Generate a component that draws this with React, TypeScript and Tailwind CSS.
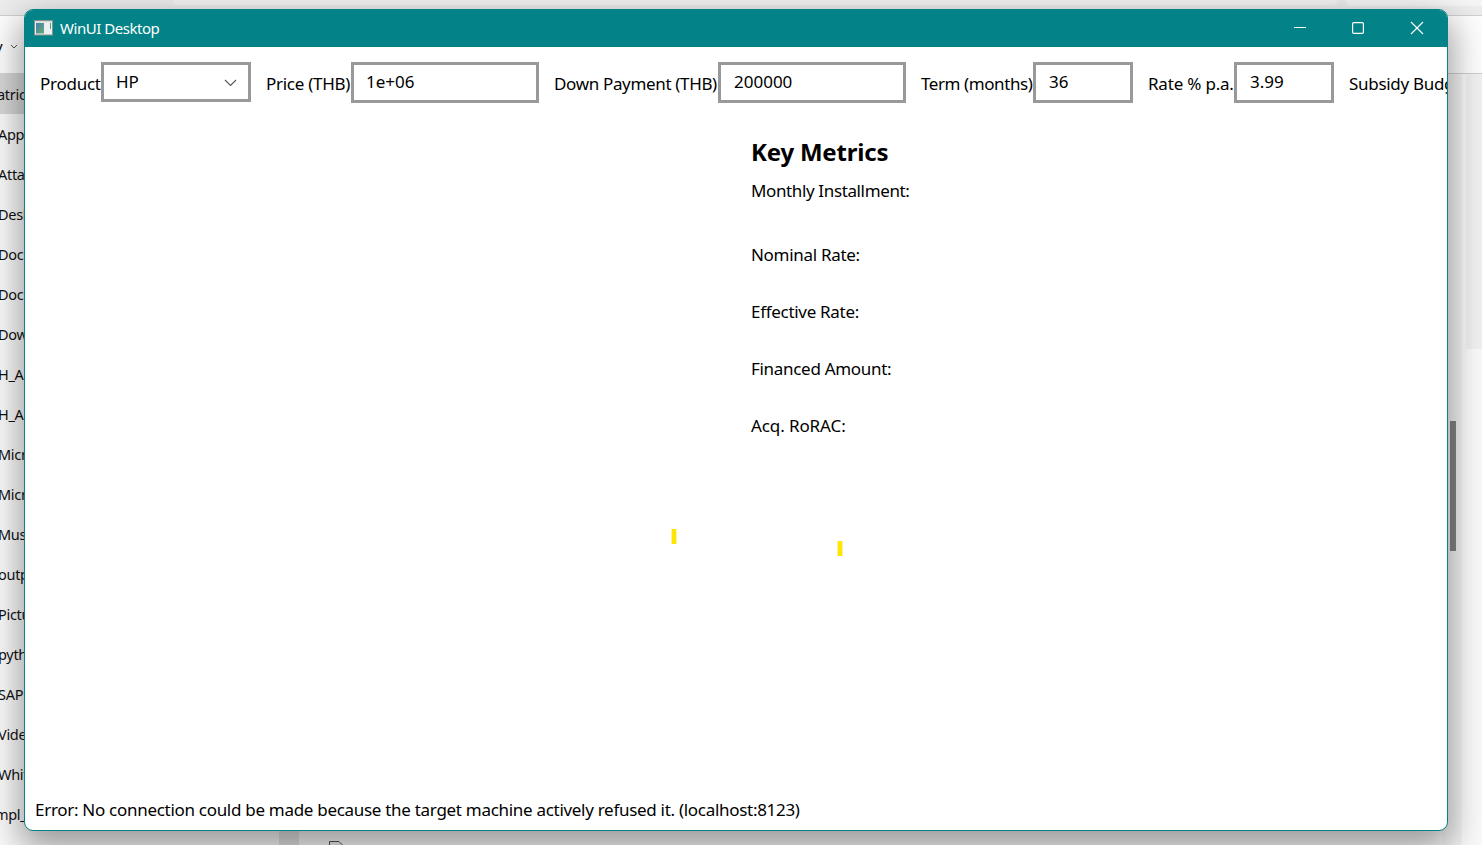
import React from "react";

const folders = [
  "atrick", "AppData", "Attachments", "Desktop", "Documents", "Documents", "Downloads",
  "H_A", "H_A", "Microsoft", "Microsoft", "Music", "output", "Pictures", "python",
  "SAP", "Videos", "Whiteboard", "mpl_",
];

const fields = [
  { label: "Price (THB)", value: "1e+06", labelWidth: "w-[85px]", boxWidth: "w-[188px]", tracking: "tracking-[-0.28px]", pad: "pl-[12px]" },
  { label: "Down Payment (THB)", value: "200000", labelWidth: "w-[164px]", boxWidth: "w-[188px]", tracking: "tracking-[-0.34px]", pad: "pl-[13px]" },
  { label: "Term (months)", value: "36", labelWidth: "w-[112px]", boxWidth: "w-[100px]", tracking: "tracking-[-0.42px]", pad: "pl-[13px]" },
  { label: "Rate % p.a.", value: "3.99", labelWidth: "w-[86px]", boxWidth: "w-[100px]", tracking: "tracking-[-0.2px]", pad: "pl-[13px]" },
];

const metrics = [
  { label: "Nominal Rate:", tracking: "tracking-[-0.3px]" },
  { label: "Effective Rate:", tracking: "tracking-[-0.3px]" },
  { label: "Financed Amount:", tracking: "tracking-[-0.3px]" },
  { label: "Acq. RoRAC:", tracking: "tracking-[-0.1px]" },
];

function Explorer() {
  return (
    <div className="flex h-full flex-col bg-[#fafafa]">
      <div className="flex h-[15px] shrink-0 bg-[#ececec]">
        <div className="h-[5px] w-[173px]" />
        <div className="h-[5px] w-[1164px] rounded-b-sm bg-[#f3f3f3]" />
        <div className="h-[6px] w-[10px]" />
        <div className="h-[6px] flex-1 rounded-bl-sm bg-[#f5f5f5]" />
      </div>
      <div className="flex h-[59px] shrink-0 items-center border-y border-[#cfcfcf] bg-[#fdfdfd]">
        <span className="-ml-[5px] mt-[3px] text-[15px]">v</span>
        <svg className="ml-[7px] mt-[4px]" width="8" height="6" viewBox="0 0 8 6" fill="none" stroke="#555">
          <path d="M1 1 4 4 7 1" />
        </svg>
      </div>
      <div className="flex min-h-0 flex-1">
        <div className="-mt-px w-[279px] shrink-0">
          {folders.map((name, i) => (
            <div
              key={i}
              className={
                "flex items-center overflow-hidden whitespace-nowrap text-[14.5px] tracking-[-0.3px] text-[#111] " +
                (i === 0 ? "h-[41px] bg-[#d6d6d6] pt-[3px]" : "h-[40px] pt-px")
              }
            >
              <span className={i === 18 ? "-ml-[5px]" : i === 0 ? "-ml-[3px]" : "-ml-[2px]"}>{name}</span>
            </div>
          ))}
        </div>
        <div className="w-[20px] shrink-0 bg-[#e4e4e4]" />
        <div className="flex flex-1 flex-col justify-end">
          <svg className="ml-[30px]" width="14" height="4" viewBox="0 0 14 4" fill="#eee" stroke="#555">
            <path d="M.5 5V.5H10L13 3.5V5" />
          </svg>
        </div>
        <div className="w-[21px] border-r border-[#fff] bg-[#f4f4f4] pt-[347px]">
          <div className="ml-[8px] h-[130px] w-[6px] bg-[#858585]" />
        </div>
        <div className="w-[19px] pl-[3px]">
          <div className="h-[275px] bg-[#f1f1f1]" />
        </div>
      </div>
    </div>
  );
}

function TitleBar() {
  return (
    <header className="flex h-[37px] shrink-0 items-center bg-[#038387] text-white">
      <svg className="-mt-[2px] ml-[9px]" width="19" height="16" viewBox="0 0 19 16">
        <defs>
          <linearGradient id="pane" x1="0" y1="0" x2="1" y2="1">
            <stop offset="0" stopColor="#477db0" />
            <stop offset="1" stopColor="#62ad72" />
          </linearGradient>
        </defs>
        <rect x=".5" y=".5" width="18" height="14.5" fill="#edf0f0" stroke="#8b9292" />
        <rect x="1" y="1" width="17" height="1.5" fill="#d4d9d9" />
        <rect x="2" y="3" width="8" height="10.5" fill="url(#pane)" />
        <rect x="16" y="3" width="1" height="6" fill="#58a078" />
      </svg>
      <h1 className="-mt-px ml-[7px] text-[15px] leading-[20px] tracking-[-0.46px]">WinUI Desktop</h1>
      <div className="-mt-px ml-auto mr-[23px] flex items-center gap-[45px]">
        <svg width="14" height="14" viewBox="0 0 14 14" stroke="white" fill="none"><path d="M2 6.5H14" /></svg>
        <svg width="14" height="14" viewBox="0 0 14 14" stroke="white" fill="none" strokeWidth="1.2">
          <rect x="1.6" y="1.6" width="10.8" height="10.8" rx="1.2" />
        </svg>
        <svg width="14" height="14" viewBox="0 0 14 14" stroke="white" fill="none" strokeWidth="1.2"><path d="M1 1 13 13M13 1 1 13" /></svg>
      </div>
    </header>
  );
}

export default function App() {
  return (
    <div className="relative h-[845px] w-[1482px] overflow-hidden font-['Noto_Sans','Open_Sans',sans-serif]">
      <Explorer />
      <main className="absolute left-[24px] top-[9px] flex h-[822px] w-[1424px] flex-col overflow-hidden rounded-[9px] border border-[#038387] bg-white text-[17px] leading-[24px] text-black shadow-[0_14px_34px_4px_rgba(0,0,0,0.38)]">
        <TitleBar />
        <div className="flex h-[72px] shrink-0 items-start overflow-hidden whitespace-nowrap pl-[15px] pt-[15px]">
          <label className="mt-[10px] w-[61px] shrink-0 tracking-[-0.25px]">Product</label>
          <div className="flex h-[40px] w-[150px] shrink-0 items-center justify-between border-[3px] border-[#999] pl-[12px] pr-[11px]">
            <span className="tracking-[-0.1px]">HP</span>
            <svg className="mt-px" width="13" height="8" viewBox="0 0 13 8" fill="none" stroke="#555" strokeWidth="1.1"><path d="M1 1 6.5 6.5 12 1" /></svg>
          </div>
          {fields.map((f) => (
            <React.Fragment key={f.label}>
              <label className={`ml-[15px] mt-[10px] shrink-0 ${f.labelWidth} ${f.tracking}`}>{f.label}</label>
              <div className={`flex h-[41px] shrink-0 items-center border-[3px] border-[#999] pb-[2px] ${f.pad} ${f.boxWidth}`}>{f.value}</div>
            </React.Fragment>
          ))}
          <label className="ml-[15px] mt-[10px] shrink-0 tracking-[-0.3px]">Subsidy Budget (THB)</label>
        </div>
        <section className="ml-[726px] flex flex-col whitespace-nowrap pt-[16px]">
          <h2 className="text-[24px] font-bold leading-[34px] tracking-[-0.2px]">Key Metrics</h2>
          <p className="mt-[10px] tracking-[-0.37px]">Monthly Installment:</p>
          <div className="mt-[40px] flex flex-col gap-[33px]">
            {metrics.map((m) => <p key={m.label} className={m.tracking}>{m.label}</p>)}
          </div>
        </section>
        <p className="mb-[8px] ml-[10px] mt-auto whitespace-nowrap tracking-[-0.295px]">
          Error: No connection could be made because the target machine actively refused it. (localhost:8123)
        </p>
        <div className="absolute left-[646px] top-[519px] h-[15px] w-[6px] border-x border-[#fff3a0] bg-[#ffe600]" />
        <div className="absolute left-[812px] top-[531px] h-[15px] w-[6px] border-x border-[#fff3a0] bg-[#ffe600]" />
      </main>
    </div>
  );
}
